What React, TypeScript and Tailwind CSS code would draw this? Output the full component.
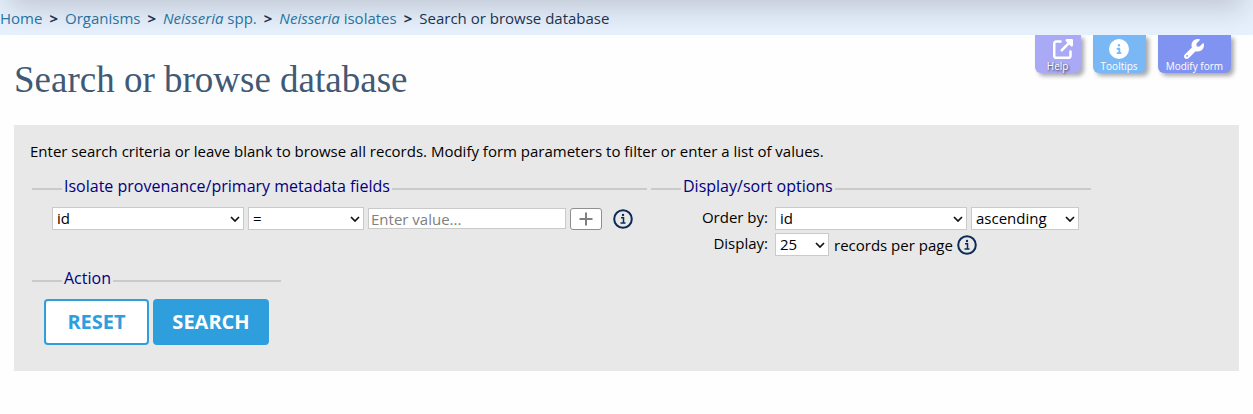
import React from "react";
import { FaCircleInfo, FaUpRightFromSquare, FaWrench } from "react-icons/fa6";

function InfoButton({ label }: { label: string }) {
  return (
    <button type="button" aria-label={label} className="h-5 w-5 text-[#0b2a56]">
      <svg viewBox="0 0 20 20" className="h-5 w-5" fill="none" stroke="currentColor">
        <circle cx="10" cy="10" r="8.8" strokeWidth="2" />
        <path d="M8 8.7h2.5v5M7.5 14h5" strokeWidth="1.5" />
        <circle cx="10" cy="6" r="1.2" fill="currentColor" stroke="none" />
      </svg>
    </button>
  );
}

function Section({ title, className, children }: { title: string; className: string; children: React.ReactNode }) {
  return (
    <fieldset className={"min-w-0 border-t-2 border-[#cacaca] " + className}>
      <legend className="ml-[30px] px-0.5 pb-1.5 text-base leading-[22px] text-[#000080]">{title}</legend>
      {children}
    </fieldset>
  );
}

function Select({ id, label, value, className }: { id?: string; label?: string; value: string; className: string }) {
  return (
    <div className={"grid items-center " + className}>
      <select
        id={id}
        aria-label={label}
        className="col-start-1 row-start-1 h-[23px] w-full appearance-none border border-[#cacaca] bg-white pl-1 pr-5 text-[15px] leading-[21px] text-black"
      >
        <option>{value}</option>
      </select>
      <svg
        viewBox="0 0 10 6"
        className="pointer-events-none col-start-1 row-start-1 mr-1 h-1.5 w-2.5 justify-self-end"
        fill="none"
        stroke="#111"
        strokeWidth="1.7"
      >
        <path d="M1 1l4 4 4-4" />
      </svg>
    </div>
  );
}

function Separator() {
  return <span className="px-[7px] font-bold text-[#1e3450]">&gt;</span>;
}

export default function App() {
  return (
    <div className="min-h-screen bg-[#fefefe] font-['Open_Sans','Noto_Sans',sans-serif] text-[15px] leading-5 text-black">
      <nav className="relative flex h-[35px] items-center overflow-hidden bg-[#e7f1fe] pb-px pt-px text-[#1e3450]">
        <div className="pointer-events-none absolute inset-x-2 -top-10 h-10 shadow-[0_10px_28px_rgba(0,0,0,0.17)]" />
        <a href="#home" className="text-[#2a77a5]">Home</a>
        <Separator />
        <a href="#organisms" className="text-[#2a77a5]">Organisms</a>
        <Separator />
        <a href="#spp" className="text-[#2a77a5]"><i>Neisseria</i> spp.</a>
        <Separator />
        <a href="#isolates" className="text-[#2a77a5]"><i>Neisseria</i> isolates</a>
        <Separator />
        <span>Search or browse database</span>
      </nav>

      <header className="flex items-start justify-between pl-3.5 pr-[22px]">
        <h1 className="pt-6 font-['Liberation_Serif',serif] text-[37px] leading-[42px] text-[#415974]">
          Search or browse database
        </h1>
        <div className="flex gap-3 text-[10px] leading-3 text-white [text-shadow:1px_1px_2px_#333]">
          <a href="#help" className="flex h-[38px] flex-col items-center gap-px rounded-b-md bg-[#a9a9f5] px-2 pt-1 shadow-[3px_3px_4px_#aaa]">
            <FaUpRightFromSquare className="ml-2.5 h-5 w-5 shrink-0" />
            <span>Help</span>
          </a>
          <button type="button" className="flex h-[38px] flex-col items-center gap-px rounded-b-md bg-[#7ab8f5] px-2 pt-1 shadow-[3px_3px_4px_#aaa]">
            <FaCircleInfo className="h-5 w-5 shrink-0" />
            <span>Tooltips</span>
          </button>
          <button type="button" className="flex h-[38px] flex-col items-center gap-px rounded-b-md bg-[#8093f1] px-2 pt-1 shadow-[3px_3px_4px_#aaa]">
            <FaWrench className="h-5 w-5 shrink-0" />
            <span>Modify form</span>
          </button>
        </div>
      </header>

      <form className="mx-3.5 mt-6 bg-[#e8e8e8] px-4 pb-[26px] pt-4" onSubmit={(e) => e.preventDefault()}>
        <p>Enter search criteria or leave blank to browse all records. Modify form parameters to filter or enter a list of values.</p>

        <div className="mt-3.5 flex flex-wrap gap-1 pl-0.5">
          <Section title="Isolate provenance/primary metadata fields" className="w-[615px]">
            <div className="mt-1 flex items-center gap-1 pl-5">
              <Select label="Field" value="id" className="w-48" />
              <Select label="Operator" value="=" className="w-29" />
              <input
                aria-label="Value"
                placeholder="Enter value..."
                className="h-[21px] w-[198px] border border-[#cacaca] bg-white px-0.5 text-[15px] leading-5 placeholder:text-[#808080]"
              />
              <button type="button" aria-label="Add field" className="flex h-[22px] w-8 items-center justify-center rounded-[3px] border border-[#8f8f8f] bg-white">
                <svg viewBox="0 0 14 14" className="h-3.5 w-3.5 text-[#808080]" stroke="currentColor" strokeWidth="2"><path d="M7 0.5v13M0.5 7h13" /></svg>
              </button>
              <div className="flex pl-[7px]"><InfoButton label="About searching" /></div>
            </div>
          </Section>
          <Section title="Display/sort options" className="w-[440px]">
            <div className="mt-1 flex flex-col gap-[3px]">
              <div className="flex items-start gap-1">
                <label htmlFor="order" className="w-[120px] pr-[3px] text-right">Order by:</label>
                <Select id="order" value="id" className="w-48" />
                <Select label="Direction" value="ascending" className="w-27" />
              </div>
              <div className="flex items-start gap-1">
                <label htmlFor="display" className="w-[120px] pr-[3px] text-right">Display:</label>
                <Select id="display" value="25" className="w-[54px]" />
                <div className="flex items-center gap-1 pl-px pt-0.5">
                  <span>records per page</span>
                  <InfoButton label="About page size" />
                </div>
              </div>
            </div>
          </Section>
        </div>

        <div className="mt-[11px] pl-0.5">
          <Section title="Action" className="w-[249px]">
            <div className="mt-1 flex gap-1 pl-3 text-xl font-bold leading-6">
              <button type="reset" className="h-[46px] w-[105px] rounded-[4px] border-2 border-[#2f9edd] bg-white text-[#2f9edd]">RESET</button>
              <button type="submit" className="h-[46px] w-29 rounded-[4px] border-2 border-[#2f9edd] bg-[#2f9edd] text-white">SEARCH</button>
            </div>
          </Section>
        </div>
      </form>
    </div>
  );
}
